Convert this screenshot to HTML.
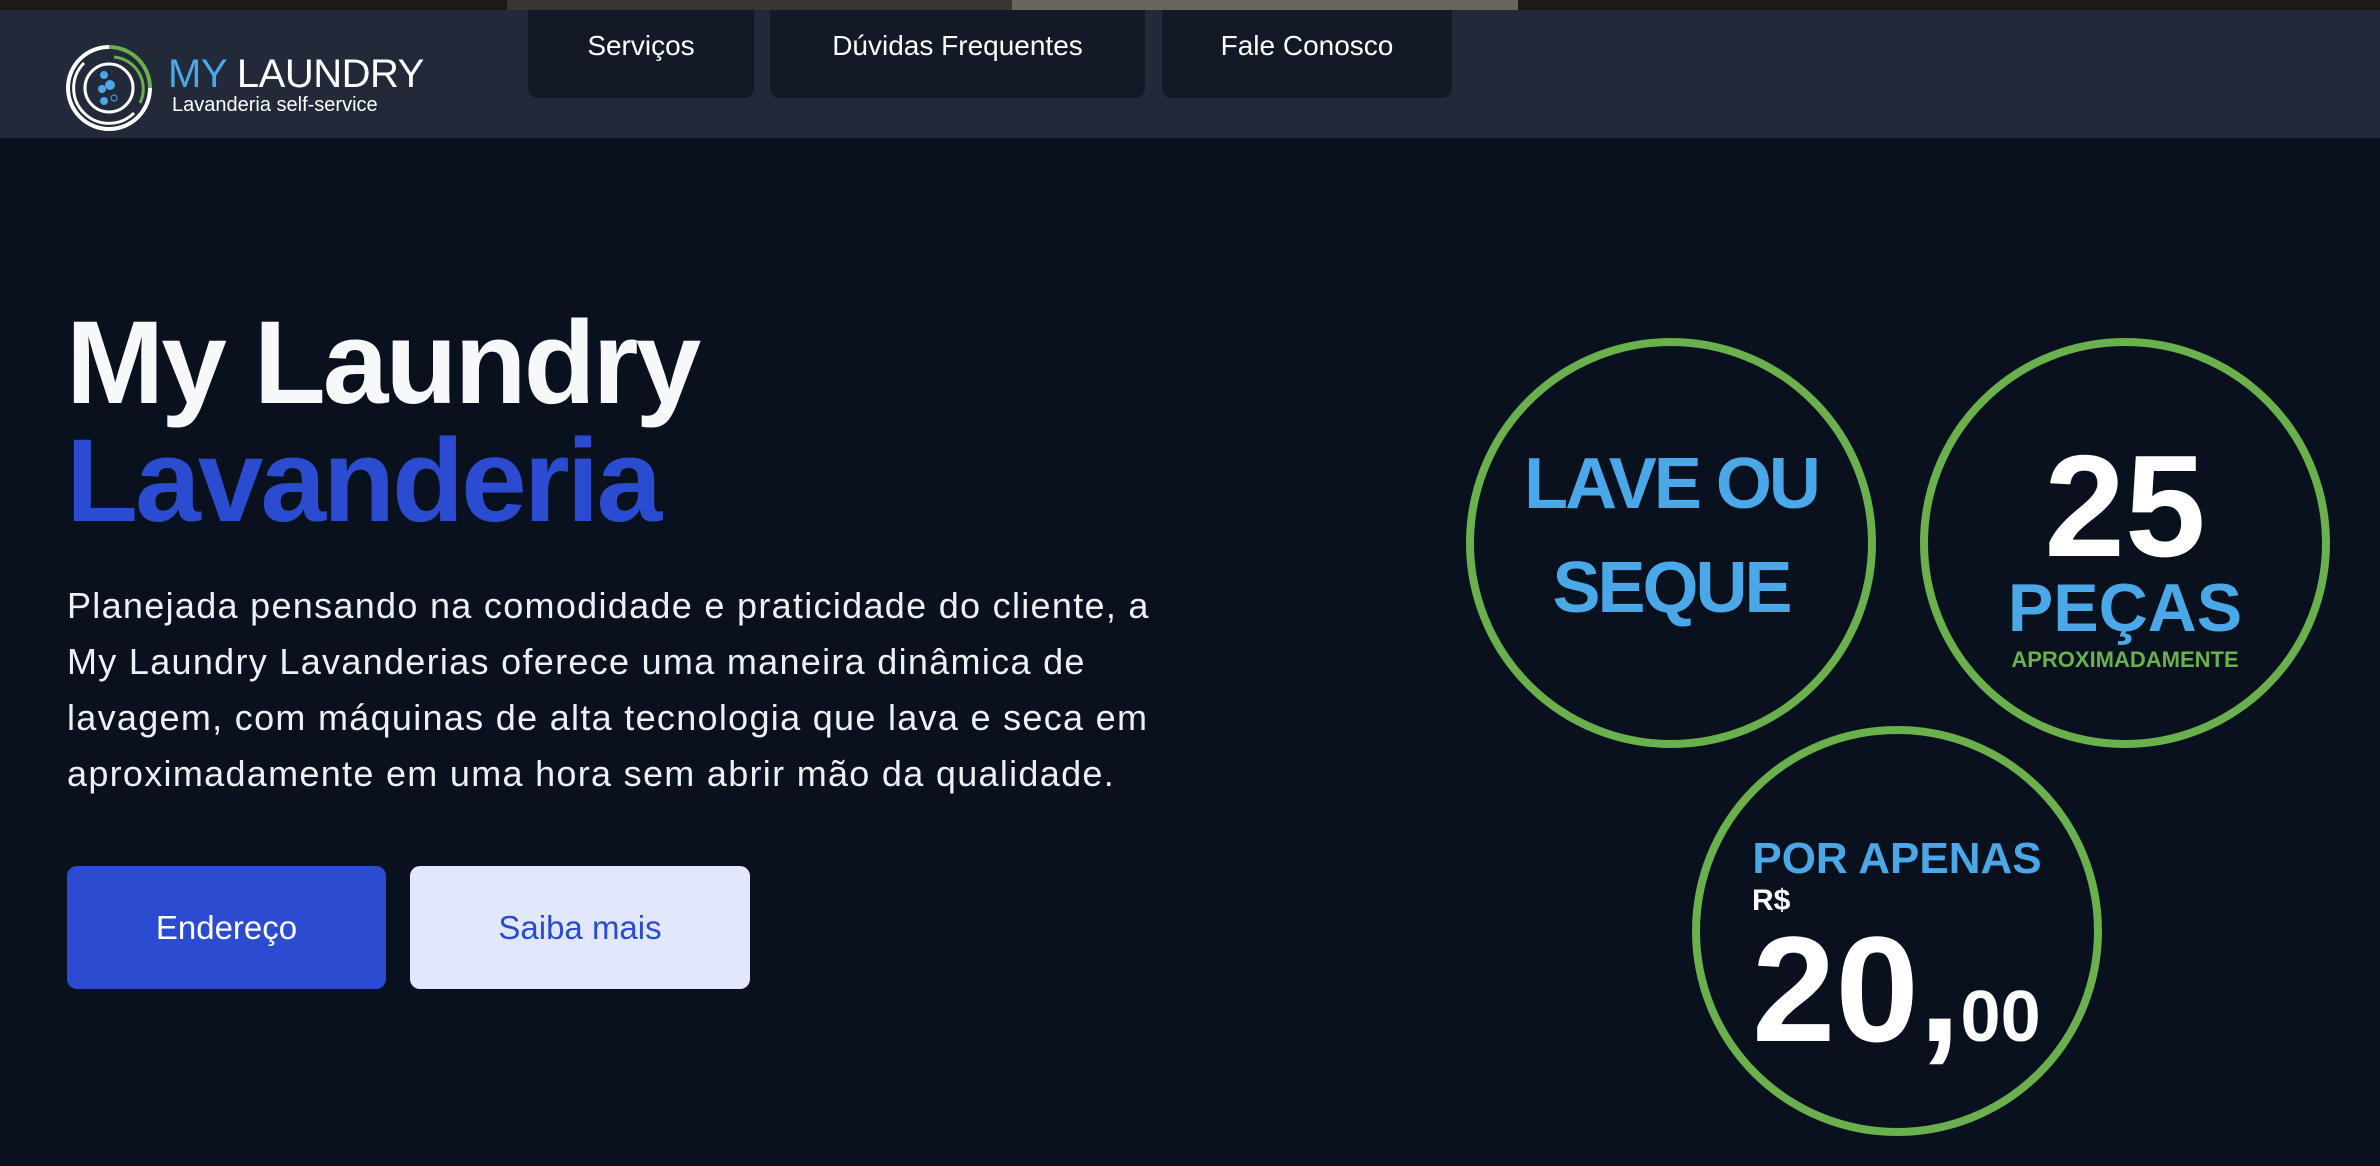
<!DOCTYPE html>
<html><head><meta charset="utf-8"><style>
*{margin:0;padding:0;box-sizing:border-box}
body{width:2380px;height:1166px;background:#0a111e;font-family:"Liberation Sans",sans-serif;overflow:hidden;position:relative}
.strip{position:absolute;left:0;top:0;width:2380px;height:10px;background:#1c1a19}
.strip i{position:absolute;top:0;height:10px}
header{position:absolute;left:0;top:10px;width:2380px;height:128px;background:#222938}
.tab{position:absolute;top:10px;height:88px;background:#131a27;border-radius:0 0 10px 10px;color:#fff;font-size:28px;text-align:center;padding-top:20px}
h1{position:absolute;left:66px;top:304px;font-size:118px;font-weight:bold;color:#f7f8fa;letter-spacing:-3px;line-height:118px}
h1 span{color:#2b4cd1}
p{position:absolute;left:67px;top:578px;font-size:36px;line-height:56px;color:#eef0f4;letter-spacing:1.3px;white-space:nowrap}
.btn{position:absolute;top:866px;height:123px;border-radius:10px;font-size:33px;text-align:center;line-height:123px}
.c{position:absolute;width:410px;height:410px;border:8px solid #6ab04c;border-radius:50%;text-align:center;font-weight:bold}
</style></head><body>
<div class="strip"><i style="left:507px;width:505px;background:#3a3532"></i><i style="left:1012px;width:506px;background:#6b6560"></i></div>
<header>
<svg style="position:absolute;left:64px;top:33px" width="90" height="90" viewBox="0 0 90 90">
<path d="M45 4 A41 41 0 1 0 86 45" fill="none" stroke="#fff" stroke-width="4"/>
<path d="M45 4 A41 41 0 0 1 86 45" fill="none" stroke="#6ab04c" stroke-width="4"/>
<path d="M20 20 A32 32 0 1 0 70 70" fill="none" stroke="#fff" stroke-width="3"/>
<path d="M50 14 A32 32 0 0 1 76 60" fill="none" stroke="#6ab04c" stroke-width="3"/>
<circle cx="45" cy="45" r="24" fill="none" stroke="#fff" stroke-width="3"/>
<circle cx="40" cy="32" r="4" fill="#4aa8e8"/><circle cx="46" cy="42" r="5" fill="#4aa8e8"/><circle cx="38" cy="46" r="4" fill="#4aa8e8"/><circle cx="40" cy="58" r="4" fill="#4aa8e8"/><circle cx="50" cy="55" r="3" fill="none" stroke="#4aa8e8"/>
</svg>
<div style="position:absolute;left:168px;top:42px;font-size:40px;color:#fff;letter-spacing:-0.5px"><span style="color:#4aa8e8">MY</span> LAUNDRY</div>
<div style="position:absolute;left:172px;top:84px;font-size:20px;color:#fff">Lavanderia self-service</div>
</header>
<div class="tab" style="left:528px;width:226px">Serviços</div>
<div class="tab" style="left:770px;width:375px">Dúvidas Frequentes</div>
<div class="tab" style="left:1162px;width:290px">Fale Conosco</div>
<h1>My Laundry<br><span>Lavanderia</span></h1>
<p>Planejada pensando na comodidade e praticidade do cliente, a<br>My Laundry Lavanderias oferece uma maneira dinâmica de<br>lavagem, com máquinas de alta tecnologia que lava e seca em<br>aproximadamente em uma hora sem abrir mão da qualidade.</p>
<div class="btn" style="left:67px;width:319px;background:#2b4cd1;color:#fff">Endereço</div>
<div class="btn" style="left:410px;width:340px;background:#e1e7fc;color:#2b4cd1">Saiba mais</div>
<div class="c" style="left:1466px;top:338px;color:#4aa8e8;font-size:72px;letter-spacing:-3px;line-height:104px;padding-top:86px">LAVE OU<br>SEQUE</div>
<div class="c" style="left:1920px;top:338px">
<div style="color:#fff;font-size:145px;line-height:145px;margin-top:88px">25</div>
<div style="color:#4aa8e8;font-size:68px;line-height:70px;margin-top:-6px">PEÇAS</div>
<div style="color:#6ab04c;font-size:22px;margin-top:4px">APROXIMADAMENTE</div></div>
<div class="c" style="left:1692px;top:726px">
<div style="color:#4aa8e8;font-size:44px;margin-top:100px">POR APENAS</div>
<div style="position:absolute;left:52px;top:150px;color:#fff;font-size:30px">R$</div>
<div style="position:absolute;left:52px;top:170px;color:#fff;font-size:150px;white-space:nowrap;line-height:170px">20,<span style="font-size:72px">00</span></div></div>
</body></html>
